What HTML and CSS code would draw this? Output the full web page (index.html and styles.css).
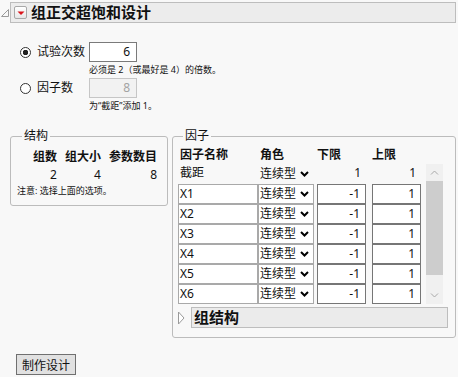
FILE: index.html
```html
<!DOCTYPE html>
<html lang="zh">
<head>
    <meta charset="UTF-8">
    <title>组正交超饱和设计</title>
    <link rel="stylesheet" href="styles.css">
</head>
<body>
    <div class="outline">
        <svg class="corner" width="10" height="21" viewBox="0 0 10 21">
            <path d="M1.5 14.5 L8.5 7.5 L8.5 14.5 Z" fill="none" stroke="#9a9a9a" stroke-width="1"/>
        </svg>
        <div class="outline-bar">
            <span class="menu-btn">
                <svg width="10" height="10" viewBox="0 0 10 10"><path d="M1.5 3.5 L8.5 3.5 L5 7 Z" fill="#d9141b"/></svg>
            </span>
            <h1 class="title">组正交超饱和设计</h1>
        </div>
    </div>

    <div class="runs">
        <label class="choice"><span class="radio checked"></span>试验次数</label>
        <span class="num-box">6</span>
        <span class="hint">必须是 2（或最好是 4）的倍数。</span>

        <label class="choice"><span class="radio"></span>因子数</label>
        <span class="num-box disabled">8</span>
        <span class="hint short">为“截距”添加 1。</span>
    </div>

    <div class="panels">
        <fieldset class="group structure">
            <legend>结构</legend>
            <div class="stats">
                <span class="head">组数</span>
                <span class="head">组大小</span>
                <span class="head">参数数目</span>
                <span>2</span>
                <span>4</span>
                <span>8</span>
            </div>
            <p class="note">注意: 选择上面的选项。</p>
        </fieldset>

        <fieldset class="group factors">
            <legend>因子</legend>
            <div class="factor-head">
                <span class="name">因子名称</span>
                <span class="role">角色</span>
                <span class="limit">下限</span>
                <span class="limit">上限</span>
            </div>
            <div class="factor-body">
                <div class="rows" id="rows">
                    <span class="name plain">截距</span>
                    <span class="role plain">连续型<svg class="chev" width="9" height="6" viewBox="0 0 9 6"><path d="M1 1 L4.5 4.5 L8 1" fill="none" stroke="#000" stroke-width="2"/></svg></span>
                    <span class="limit plain">1</span>
                    <span class="limit plain">1</span>
                </div>
                <div class="scrollbar">
                    <span class="arrow"><svg width="9" height="5" viewBox="0 0 9 5"><path d="M1 4.5 L4.5 1 L8 4.5" fill="none" stroke="#a8a8a8" stroke-width="1"/></svg></span>
                    <span class="thumb"></span>
                    <span class="track"></span>
                    <span class="arrow"><svg width="9" height="5" viewBox="0 0 9 5"><path d="M1 0.5 L4.5 4 L8 0.5" fill="none" stroke="#a8a8a8" stroke-width="1"/></svg></span>
                </div>
            </div>
            <div class="sub-outline">
                <svg class="open-tri" width="7" height="14" viewBox="0 0 7 14">
                    <path d="M0.5 1 L6 7 L0.5 13 Z" fill="#fff" stroke="#9a9a9a" stroke-width="1"/>
                </svg>
                <div class="sub-bar">组结构</div>
            </div>
        </fieldset>
    </div>

    <button class="make">制作设计</button>

    <script>
        // Factor rows X1..X6
        const rows = document.getElementById('rows');
        for (let i = 1; i <= 6; i++) {
            rows.insertAdjacentHTML('beforeend',
                `<span class="name cell">X${i}</span>` +
                `<span class="role cell">连续型<svg class="chev" width="9" height="6" viewBox="0 0 9 6"><path d="M1 1 L4.5 4.5 L8 1" fill="none" stroke="#000" stroke-width="2"/></svg></span>` +
                `<span class="limit box">-1</span>` +
                `<span class="limit box">1</span>`);
        }
    </script>
</body>
</html>
```

FILE: styles.css
```css
* {
    box-sizing: border-box;
}

body {
    margin: 0;
    width: 458px;
    background: #f8f8f8;
    font-family: "Noto Sans", "Noto Sans CJK SC", sans-serif;
    font-size: 12px;
    color: #111;
}

/* top outline header */
.outline {
    display: flex;
    margin: 2px 2px 0 0;
    height: 21px;
}

.corner {
    flex: none;
}

.outline-bar {
    flex: 1;
    display: flex;
    align-items: center;
    gap: 4px;
    padding-left: 3px;
    border: 1px solid #bdbdbd;
    background: #ececec;
}

.menu-btn {
    width: 13px;
    height: 13px;
    display: flex;
    align-items: center;
    justify-content: center;
    border: 1px solid #a8a8a8;
    border-radius: 2px;
    background: linear-gradient(#ffffff, #e6e6e6);
}

.title {
    margin: 0;
    font-size: 15px;
    font-weight: bold;
    line-height: 19px;
}

/* number of runs */
.runs {
    display: grid;
    grid-template-columns: 69px auto;
    grid-template-rows: 20px 16px 20px 14px;
    margin: 19px 0 0 20px;
}

.choice {
    display: flex;
    align-items: center;
    gap: 6px;
    line-height: 20px;
}

.radio {
    width: 11px;
    height: 11px;
    border: 1px solid #333;
    border-radius: 50%;
    background: #fff;
}

.radio.checked {
    background: radial-gradient(circle, #222 0 2.5px, #fff 3px);
}

.num-box {
    width: 48px;
    height: 20px;
    border: 1px solid #7a7a7a;
    background: #fff;
    text-align: right;
    padding-right: 6px;
    line-height: 18px;
}

.num-box.disabled {
    border-color: #c6c6c6;
    background: #f2f2f2;
    color: #a3a3a3;
}

.hint {
    grid-column: 2;
    font-size: 9px;
    line-height: 16px;
    white-space: nowrap;
}

.hint.short {
    line-height: 12px;
    padding-top: 2px;
}

/* group boxes */
.panels {
    display: flex;
    align-items: flex-start;
    gap: 4px;
    margin: 16px 2px 0 10px;
}

.group {
    margin: 0;
    min-width: 0;
    border: 1px solid #bcbcbc;
    border-radius: 3px;
}

.group legend {
    margin-left: 5px;
    padding: 0 2px;
    line-height: 16px;
}

.structure {
    width: 158px;
    padding: 5px 10px 8px 6px;
}

.stats {
    display: grid;
    grid-template-columns: repeat(3, auto);
    justify-content: end;
    column-gap: 8px;
    row-gap: 2px;
    text-align: right;
    line-height: 16px;
}

.stats .head {
    font-weight: bold;
}

.note {
    margin: 1px 0 0;
    font-size: 9px;
    line-height: 13px;
    white-space: nowrap;
}

.factors {
    width: 284px;
    padding: 3px 7px 9px 5px;
}

.factor-head,
.rows {
    display: grid;
    grid-template-columns: 80px 56px 52px 55px;
}

.factor-head {
    font-weight: bold;
    line-height: 16px;
    margin-bottom: 1px;
}

.factor-head .name,
.factor-head .role {
    padding-left: 2px;
}

.factor-head .limit {
    width: 49px;
    justify-self: end;
}

.factor-body {
    display: flex;
    gap: 5px;
}

.rows {
    grid-auto-rows: 20px;
    width: 243px;
}

.rows span {
    line-height: 18px;
}

.plain {
    padding-left: 2px;
}

.rows .limit {
    width: 49px;
    justify-self: end;
    text-align: right;
    padding-right: 5px;
}

.cell {
    border: 1px solid #a9a9a9;
    background: #fff;
    padding-left: 1px;
}

.role {
    display: flex;
    align-items: center;
}

.chev {
    margin-left: 4px;
}

.box {
    border: 1px solid #767676;
    background: #fff;
}

.scrollbar {
    width: 17px;
    height: 140px;
    display: flex;
    flex-direction: column;
    background: #f0f0f0;
}

.arrow {
    height: 17px;
    display: flex;
    align-items: center;
    justify-content: center;
}

.thumb {
    height: 94px;
    background: #cdcdcd;
}

.track {
    flex: 1;
}

.sub-outline {
    display: flex;
    align-items: center;
    gap: 6px;
    margin-top: 3px;
}

.open-tri {
    flex: none;
}

.sub-bar {
    width: 257px;
    height: 21px;
    border: 1px solid #bdbdbd;
    background: #ebebeb;
    padding-left: 2px;
    font-size: 15px;
    font-weight: bold;
    line-height: 19px;
}

.make {
    display: block;
    margin: 16px 0 0 16px;
    width: 60px;
    height: 21px;
    padding: 0;
    border: 1px solid #707070;
    background: #e1e1e1;
    font-family: inherit;
    font-size: 12px;
    color: #111;
}
```
